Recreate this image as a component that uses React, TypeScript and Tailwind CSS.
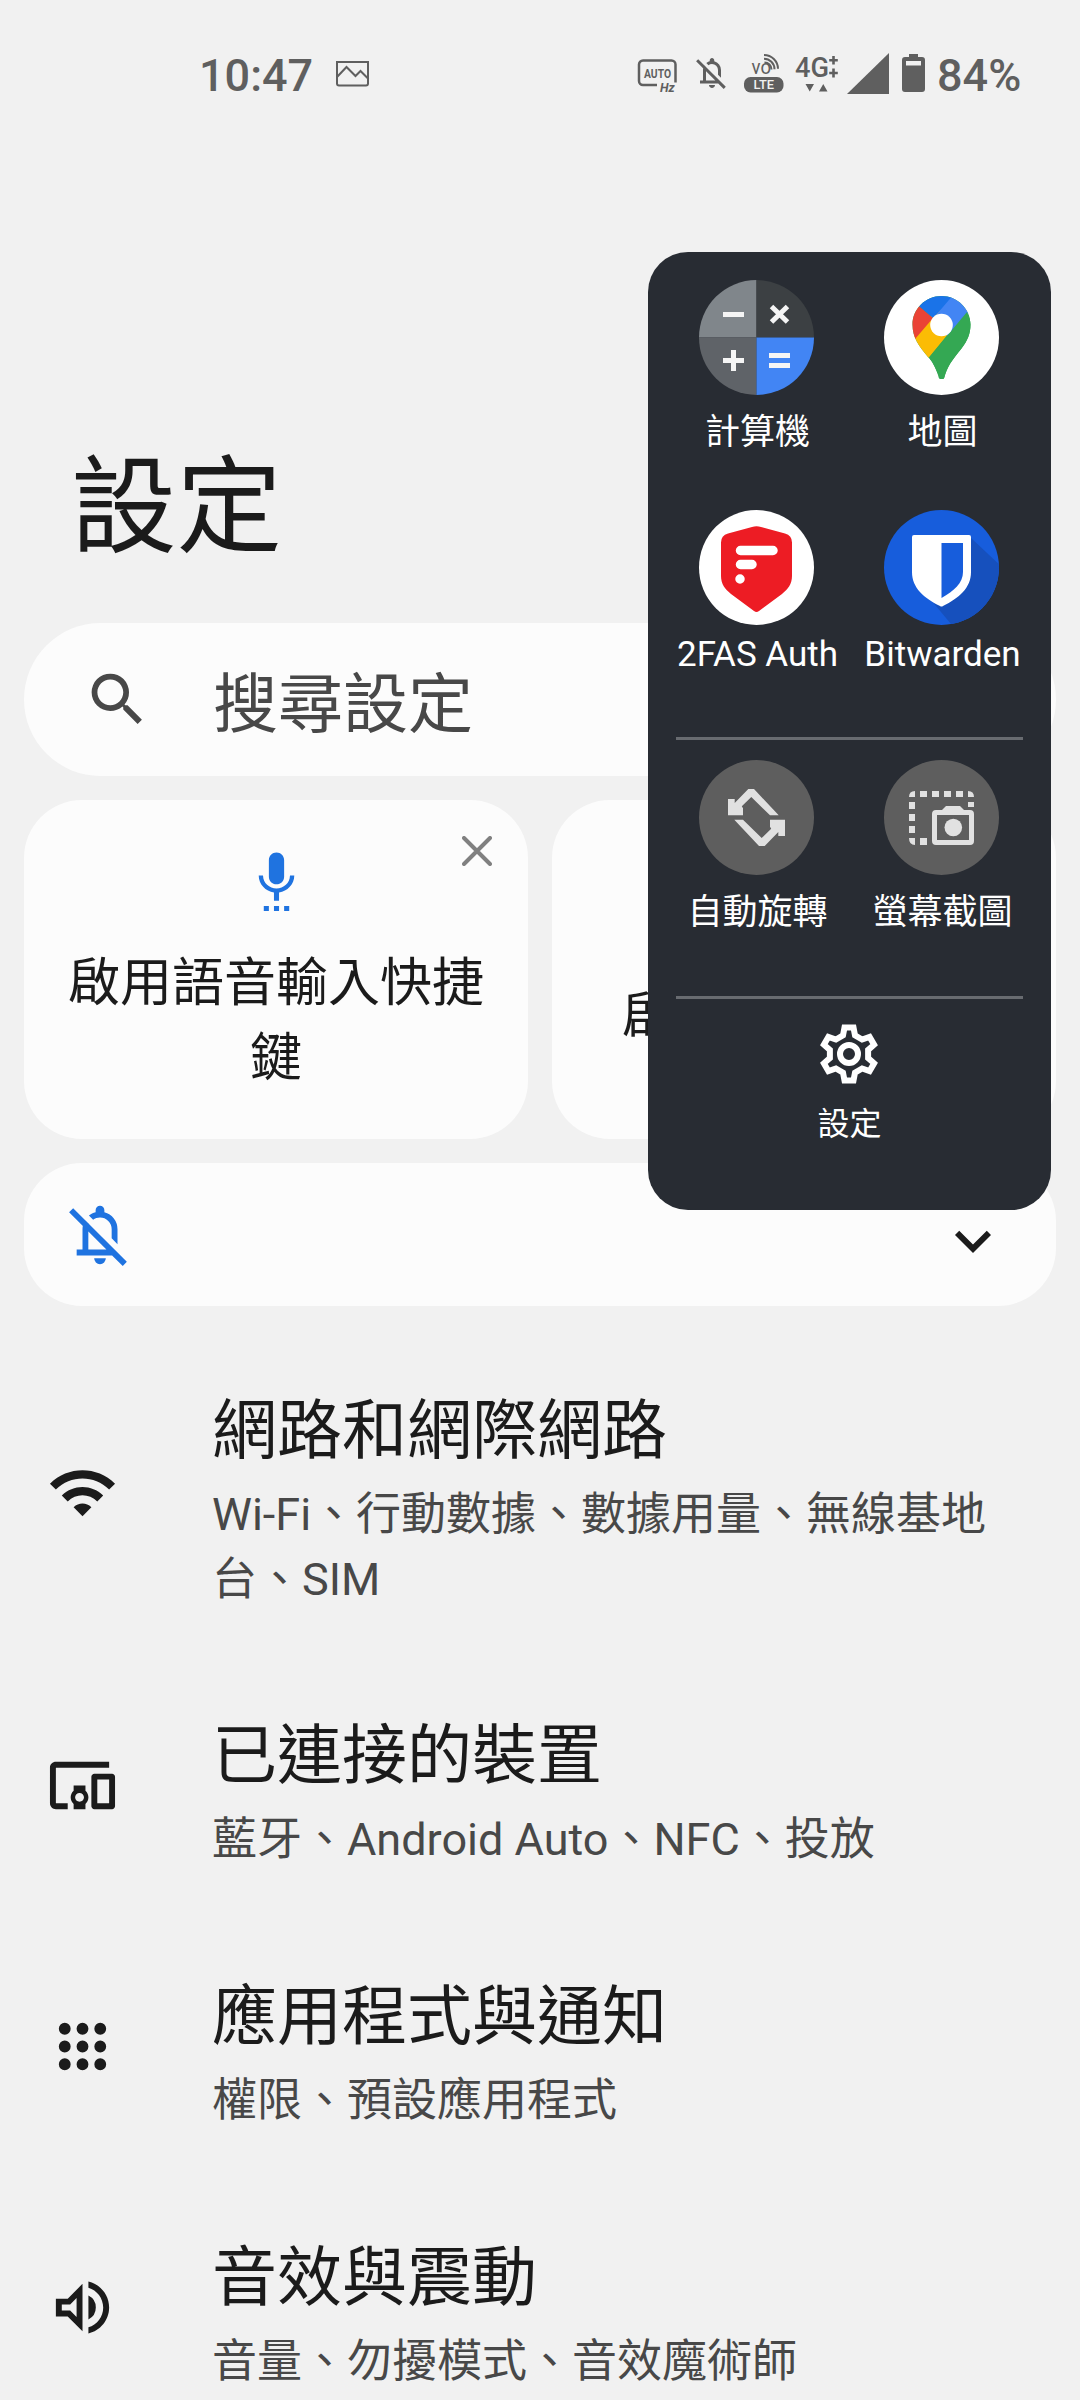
import { ReactNode } from "react";

const cjk = "font-[Roboto,'Noto_Sans_CJK_TC',sans-serif]";

function Icon({ size = 72, d, className = "" }: { size?: number; d: string; className?: string }) {
  return (
    <svg width={size} height={size} viewBox="0 0 24 24" fill="currentColor" className={`shrink-0 ${className}`}>
      <path d={d} />
    </svg>
  );
}

const bellOff =
  "M4 19v-2h2v-7q0-.825.213-1.625T6.850 6.850L8.350 8.350Q8.175 8.750 8.087 9.162T8 10v7h6.200L1.400 4.200l1.400-1.400 18.400 18.400-1.400 1.400-3.650-3.600H4ZM18 15.150l-2-2V10q0-1.650-1.175-2.825T12 6q-.65 0-1.250.2T9.650 6.800L8.200 5.350q.5-.4 1.075-.687T10.500 4.200v-.7q0-.625.437-1.062T12 2t1.062.437T13.500 3.500v.7q2 .5 3.250 2.113T18 10v5.150ZM12 22q-.825 0-1.412-.587T10 20h4q0 .825-.587 1.413T12 22Z";

const items = [
  {
    title: "網路和網際網路",
    sub: "Wi-Fi、行動數據、數據用量、無線基地台、SIM",
    height: "h-[325px]",
    icon: "M1 9l2 2c4.97-4.97 13.03-4.97 18 0l2-2C16.93 2.93 7.08 2.93 1 9zm8 8l3 3 3-3c-1.65-1.66-4.34-1.66-6 0zm-4-4l2 2c2.76-2.76 7.24-2.76 10 0l2-2C15.14 9.14 8.87 9.14 5 13z",
    iconTop: "mt-[70px]",
  },
  {
    title: "已連接的裝置",
    sub: "藍牙、Android Auto、NFC、投放",
    height: "h-[261px]",
    icon: "M3 6h18V4H3c-1.1 0-2 .9-2 2v12c0 1.1.9 2 2 2h4v-2H3V6zm10 6H9v1.78c-.61.55-1 1.33-1 2.22s.39 1.67 1 2.22V20h4v-1.78c.61-.55 1-1.34 1-2.22s-.39-1.67-1-2.22V12zm-2 5.5c-.83 0-1.5-.67-1.5-1.5s.67-1.5 1.5-1.5 1.5.67 1.5 1.5-.67 1.5-1.5 1.5zM22 8h-6c-.5 0-1 .5-1 1v10c0 .5.5 1 1 1h6c.5 0 1-.5 1-1V9c0-.5-.5-1-1-1zm-1 10h-4v-8h4v8z",
    iconTop: "mt-[38px]",
  },
  {
    title: "應用程式與通知",
    sub: "權限、預設應用程式",
    height: "h-[261px]",
    icon: "M6 4a2 2 0 1 0 0 4 2 2 0 0 0 0-4zm6 0a2 2 0 1 0 0 4 2 2 0 0 0 0-4zm6 0a2 2 0 1 0 0 4 2 2 0 0 0 0-4zM6 10a2 2 0 1 0 0 4 2 2 0 0 0 0-4zm6 0a2 2 0 1 0 0 4 2 2 0 0 0 0-4zm6 0a2 2 0 1 0 0 4 2 2 0 0 0 0-4zM6 16a2 2 0 1 0 0 4 2 2 0 0 0 0-4zm6 0a2 2 0 1 0 0 4 2 2 0 0 0 0-4zm6 0a2 2 0 1 0 0 4 2 2 0 0 0 0-4z",
    iconTop: "mt-[38px]",
  },
  {
    title: "音效與震動",
    sub: "音量、勿擾模式、音效魔術師",
    height: "h-[200px]",
    icon: "M3 9v6h4l5 5V4L7 9H3zm7-.17v6.34L7.83 13H5v-2h2.83L10 8.83zM16.5 12A4.5 4.5 0 0 0 14 7.97v8.05A4.47 4.47 0 0 0 16.5 12zM14 3.23v2.06c2.89.86 5 3.54 5 6.71s-2.11 5.85-5 6.71v2.06c4.01-.91 7-4.49 7-8.77s-2.99-7.86-7-8.77z",
    iconTop: "mt-[38px]",
  },
];

function StatusBar() {
  return (
    <header className="flex h-[150px] items-start pl-[199px] pt-[49px] text-[#5f5f5f]">
      <div className="w-[137px] text-[45px] font-medium leading-[53px]">10:47</div>
      <svg width="34" height="28" viewBox="0 0 34 28" className="mt-[11px] shrink-0" fill="none" stroke="currentColor" strokeWidth="2">
        <path d="M1 2h31v21.500a2 2 0 0 1-2 2H3a2 2 0 0 1-2-2z" />
        <path d="M1 17l9.500-10 9 9 5-5 8 8" />
      </svg>
      <svg width="41" height="40" viewBox="0 0 41 40" className="ml-[267px] mt-[9px] shrink-0" fill="none" stroke="currentColor" strokeWidth="2.500">
        <path d="M20 27H6a4 4 0 0 1-4-4V6.500a4 4 0 0 1 4-4h28.500a4 4 0 0 1 4 4V24.500" />
        <text x="7" y="19.700" fontSize="12" fontWeight="700" textLength="27" lengthAdjust="spacingAndGlyphs" fill="currentColor" stroke="none">AUTO</text>
        <text x="23" y="33.500" fontSize="12.500" fontWeight="700" fontStyle="italic" fill="currentColor" stroke="none">Hz</text>
      </svg>
      <Icon size={36} d={bellOff} className="ml-[16px] mt-[6px]" />
      <svg width="42" height="42" viewBox="0 0 42 42" className="ml-[13px] mt-[4px] shrink-0" fill="none" stroke="currentColor" strokeWidth="2">
        <text x="8.500" y="21" fontSize="20.500" textLength="19.500" lengthAdjust="spacingAndGlyphs" fill="currentColor" stroke="none">vo</text>
        <path d="M21.500 9.500a7 7 0 0 1 7 7M21 5.700a10.500 10.500 0 0 1 10.500 10.500M21 2a14 14 0 0 1 14 13.800" />
        <rect x="1" y="24" width="39.500" height="15.500" rx="6.500" fill="currentColor" stroke="none" />
        <text x="10.500" y="36.200" fontSize="12.500" fontWeight="500" textLength="20.500" lengthAdjust="spacingAndGlyphs" fill="#f1f1f1" stroke="none">LTE</text>
      </svg>
      <svg width="46" height="48" viewBox="0 -6 46 48" className="ml-[8px] mt-[-2px] shrink-0" fill="currentColor">
        <text x="2" y="23.700" fontSize="28" fontWeight="500" textLength="34" lengthAdjust="spacingAndGlyphs">4G</text>
        <path d="M39.200 3h2.600v3h3v2.600h-3v3h-2.600v-3h-3V6h3zM39.200 15.500h2.600v3.200h3v2.600h-3v3.200h-2.600v-3.200h-3v-2.600h3zM12.500 31H21l-4.250 7.500zM26 38.500h8.500L30.250 31z" />
      </svg>
      <svg width="42" height="41" viewBox="0 0 42 41" className="ml-[8px] mt-[4px] shrink-0" fill="currentColor"><path d="M42 0v41H0z" /></svg>
      <svg width="23" height="39" viewBox="0 0 23 39" className="ml-[13px] mt-[5px] shrink-0" fill="currentColor">
        <path fillRule="evenodd" d="M7 0h9v3h4a3 3 0 0 1 3 3v29a3 3 0 0 1-3 3H3a3 3 0 0 1-3-3V6a3 3 0 0 1 3-3h4zM4 7v4.500h15V7z" />
      </svg>
      <div className="ml-[12px] text-[45px] font-medium leading-[53px]">84%</div>
    </header>
  );
}

function AppTile({ label, latin = false, children }: { label: string; latin?: boolean; children: ReactNode }) {
  return (
    <div className="flex flex-col items-center">
      <div className="h-[115px] w-[115px] overflow-hidden rounded-full">{children}</div>
      <div className={`whitespace-nowrap pl-0.5 text-[35px] leading-[52px] ${latin ? "mt-[4px]" : "mt-[12px]"}`}>{label}</div>
    </div>
  );
}

const rotateArm = "M49.300 29H55L79.700 55.300H71L52.300 37l-9.500 9.300 1.200 2v7H29V39h6.700v4z";

function EdgePanel() {
  return (
    <aside className="absolute left-[648px] top-[252px] flex h-[958px] w-[403px] flex-col rounded-[40px] bg-[#282c33] px-[28px] pt-[28px] text-white">
      <div className="grid h-[457px] grid-cols-[161px_209px] content-start gap-y-[51px]">
        <AppTile label="計算機">
          <svg viewBox="0 0 115 115">
            <path fill="#80868b" d="M0 0h57.500v57.500H0z" />
            <path fill="#3c4043" d="M57.500 0H115v57.500H57.500z" />
            <path fill="#5f6368" d="M0 57.500h57.500V115H0z" />
            <path fill="#4285f4" d="M57.500 57.500H115V115H57.500z" />
            <path stroke="#f5f5f5" strokeWidth="5" d="M24 34.500h21M24 80.500h21M34.500 70v21M70 75.500h21M70 85.500h21M72.500 26.500l16 15.500M88.500 26.500L72.500 42" />
          </svg>
        </AppTile>
        <AppTile label="地圖">
          <svg viewBox="0 0 115 115">
            <defs>
              <clipPath id="pin"><path d="M57.500 16c16 0 29 13 29 28.500 0 9-3 16-9 24C71 77 65 83 61 95c-1 4-1 4-3.500 4s-2.500 0-3.500-4c-3-9-6-14-10-18-9-11-15.500-19-15.500-32.500C28.500 29 41.500 16 57.500 16z" /></clipPath>
            </defs>
            <path fill="#fff" d="M0 0h115v115H0z" />
            <g clipPath="url(#pin)">
              <path fill="#34a853" d="M0 0h115v115H0z" />
              <path fill="#fbbc04" d="M0 90L57.500 24l13 22L45 77.500 30 95z" />
              <path fill="#ea4335" d="M20 15l15 11 14 12L31.500 58.500 20 65z" />
              <path fill="#1a73e8" d="M35.500 26.500L49 38l30-30H30z" />
              <path fill="#4285f4" d="M67.500 17L47 41l18 16 30-36V5H78z" />
              <path fill="#34a853" d="M83 32L45 77.500 60 105l35-45z" />
            </g>
            <circle cx="57.500" cy="45" r="11.300" fill="#fff" />
          </svg>
        </AppTile>
        <AppTile label="2FAS Auth" latin>
          <svg viewBox="0 0 115 115">
            <path fill="#fff" d="M0 0h115v115H0z" />
            <path fill="#ed1c24" d="M53 17q4.500-1.500 9 0l24 6.500q7 2 7 9V66c0 8-4 13-10 18L60 101q-2.500 2-5 0L32 84c-6-5-10-10-10-18V32.500q0-7 7-9z" />
            <path stroke="#fff" strokeWidth="9.500" strokeLinecap="round" d="M41.500 40.500H74M41.500 54.500H53M41 69h.01" />
          </svg>
        </AppTile>
        <AppTile label="Bitwarden" latin>
          <svg viewBox="0 0 115 115">
            <path fill="#175ddc" d="M0 0h115v115H0z" />
            <path fill="#1650bd" d="M86 27l35 33v60H72L47 90z" />
            <path fill="#fff" d="M30 25h55q2 0 2 2v35c0 16-12 26-28 34q-1.500 1-3 0C40 88 28 78 28 62V27q0-2 2-2z" />
            <path fill="#175ddc" d="M57.500 33H79v29c0 11-9 19-21.500 26z" />
          </svg>
        </AppTile>
      </div>
      <div className="h-[3px] shrink-0 bg-[#686b70]" />
      <div className="grid h-[256px] grid-cols-[161px_209px] content-start pt-[20px]">
        <AppTile label="自動旋轉">
          <svg viewBox="0 0 115 115">
            <path fill="#5e5e5e" d="M0 0h115v115H0z" />
            <g fill="#e1e1e1">
              <path d={rotateArm} />
              <path d={rotateArm} transform="rotate(180 57.500 57.500)" />
            </g>
          </svg>
        </AppTile>
        <AppTile label="螢幕截圖">
          <svg viewBox="0 0 115 115">
            <path fill="#5e5e5e" d="M0 0h115v115H0z" />
            <g fill="#e1e1e1">
              <path d="M25 37q0-6 6-6v6zM36 31h7v6h-7zM48 31h7v6h-7zM60 31h7v6h-7zM72 31h7v6h-7zM84 31q6 0 6 6h-6zM25 42h6v7h-6zM25 54h6v7h-6zM25 66h6v7h-6zM25 78h6v7q-6 0-6-7zM36 78h7v7h-7zM84 42h6v5h-6z" />
              <path fillRule="evenodd" d="M62 46h14l4 4h6q4 0 4 4v27q0 4-4 4H52q-4 0-4-4V54q0-4 4-4h6zM53 55v25h32V55z" />
              <circle cx="69.300" cy="67.500" r="8.800" />
            </g>
          </svg>
        </AppTile>
      </div>
      <div className="h-[3px] shrink-0 bg-[#686b70]" />
      <div className="flex flex-col items-center pr-[2px] pt-[19px]">
        <svg width="72" height="72" viewBox="-12 -12 24 24" fill="none" stroke="white" strokeWidth="2">
          <path d="M-1.500-8.800L1.500-8.800 2-6.200 4.370-4.830 6.870-5.700 8.370-3.100 6.370-1.370 6.370 1.370 8.370 3.100 6.870 5.700 4.370 4.830 2 6.200 1.500 8.800-1.500 8.800-2 6.200-4.370 4.830-6.870 5.700-8.370 3.100-6.370 1.370-6.370-1.370-8.370-3.100-6.870-5.700-4.370-4.830-2-6.200z" />
          <circle r="3" />
        </svg>
        <div className="mt-[10px] pl-0.5 text-[32px] leading-[48px]">設定</div>
      </div>
    </aside>
  );
}

export default function App() {
  return (
    <main lang="zh-Hant" className={`relative h-[2400px] w-[1080px] overflow-hidden bg-[#f1f1f1] text-[#1b1b1b] ${cjk}`}>
      <StatusBar />
      <h1 className="mt-[280px] pl-[71px] text-[105.500px] leading-[156px]">設定</h1>
      <div className="mx-[24px] mt-[37px] flex h-[153px] items-center rounded-full bg-[#fcfcfc] pl-[59px] text-[#484848]">
        <Icon
          size={69}
          d="M15.500 14h-.79l-.28-.27A6.470 6.470 0 0 0 16 9.500 6.500 6.500 0 1 0 9.500 16c1.610 0 3.090-.590 4.230-1.570l.27.28v.79l5 4.990L20.490 19l-4.990-5zm-6 0C7.010 14 5 11.990 5 9.500S7.010 5 9.500 5 14 7.010 14 9.500 11.990 14 9.500 14z"
        />
        <span className="ml-[61px] pt-[10px] text-[65px] leading-[96px]">搜尋設定</span>
      </div>
      <div className="mx-[24px] mt-[24px] grid h-[339px] grid-cols-2 gap-[24px] text-center text-[52px] leading-[75px]">
        <section className="relative flex flex-col items-center rounded-[58px] bg-[#fcfcfc] pt-[50px]">
          <Icon
            size={61}
            className="text-[#1f73e0]"
            d="M12 13.500c1.700 0 3-1.340 3-3V4c0-1.660-1.300-3-3-3S9 2.340 9 4v6.500c0 1.660 1.300 3 3 3zm5.300-3.500c0 3-2.540 5.100-5.300 5.100S6.700 13 6.700 10H5c0 3.410 2.720 6.230 6 6.720V20h2v-3.280c3.280-.480 6-3.300 6-6.720zM7 22h2v2H7zm4 0h2v2h-2zm4 0h2v2h-2z"
          />
          <p className="mt-[35px] w-[440px]">啟用語音輸入快捷鍵</p>
          <svg width="30" height="30" viewBox="0 0 30 30" className="absolute right-[36px] top-[36px] text-[#808080]" stroke="currentColor" strokeWidth="4" strokeLinecap="round">
            <path d="M2 2l26 26M28 2L2 28" />
          </svg>
        </section>
        <section className="rounded-[58px] bg-[#fcfcfc] pt-[180px]">啟用手勢快捷鍵</section>
      </div>
      <div className="mx-[24px] mt-[24px] flex h-[143px] items-center justify-between rounded-[58px] bg-[#fcfcfc] pl-[41px] pr-[47px]">
        <Icon size={70} d={bellOff} className="text-[#1f73e0]" />
        <Icon d="M7.410 8.590L12 13.170l4.590-4.580L18 10l-6 6-6-6z" className="mt-[12px]" />
      </div>
      <ul className="mt-[81px]">
        {items.map((item) => (
          <li key={item.title} className={`flex pl-[47px] ${item.height}`}>
            <Icon size={71} d={item.icon} className={item.iconTop} />
            <div className="ml-[94px] w-[800px]">
              <h2 className="text-[65px] leading-[88px]">{item.title}</h2>
              <p className="mt-[7px] text-[45px] leading-[65px] text-[#484848]">{item.sub}</p>
            </div>
          </li>
        ))}
      </ul>
      <EdgePanel />
    </main>
  );
}
